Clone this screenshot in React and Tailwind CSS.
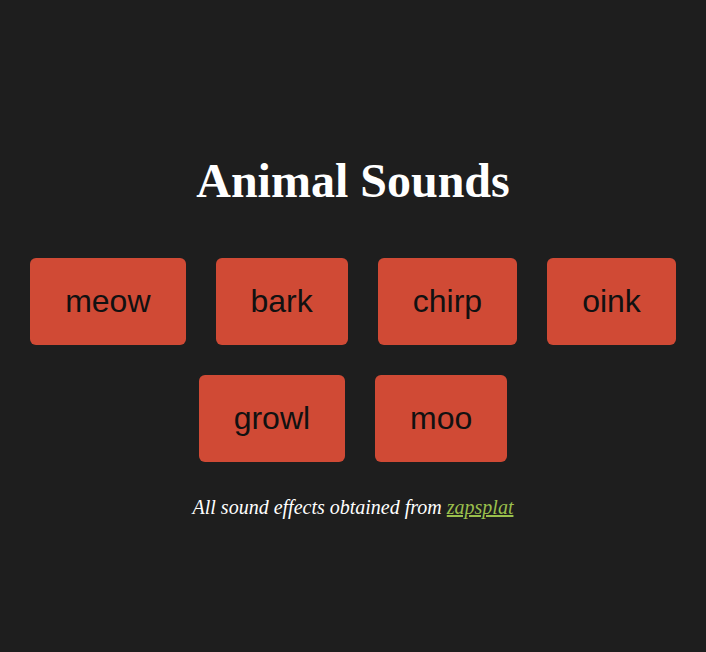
export default function App() {
  const sounds = ["meow", "bark", "chirp", "oink", "growl", "moo"];
  return (
    <div className="min-h-[652px] w-full bg-[#1e1e1e] flex flex-col items-center pt-[153px]">
      <h1 className="text-[48px] leading-[55px] font-bold text-white" style={{ fontFamily: '"Liberation Serif", "Times New Roman", serif' }}>
        Animal Sounds
      </h1>
      <div className="mt-[50px] w-full px-[15px] flex flex-wrap justify-center gap-x-[30px] gap-y-[30px]">
        {sounds.map((s) => (
          <button
            key={s}
            className="bg-[#d04a35] text-[#111] text-[32px] leading-[37px] px-[35px] py-[25px] rounded-[6px]"
            style={{ fontFamily: '"Liberation Sans", Arial, sans-serif' }}
          >
            {s}
          </button>
        ))}
      </div>
      <p className="mt-[34px] text-[20px] leading-[23px] italic text-white" style={{ fontFamily: '"Liberation Serif", "Times New Roman", serif' }}>
        All sound effects obtained from <a href="#" className="text-[#9abf4c] underline">zapsplat</a>
      </p>
    </div>
  );
}
